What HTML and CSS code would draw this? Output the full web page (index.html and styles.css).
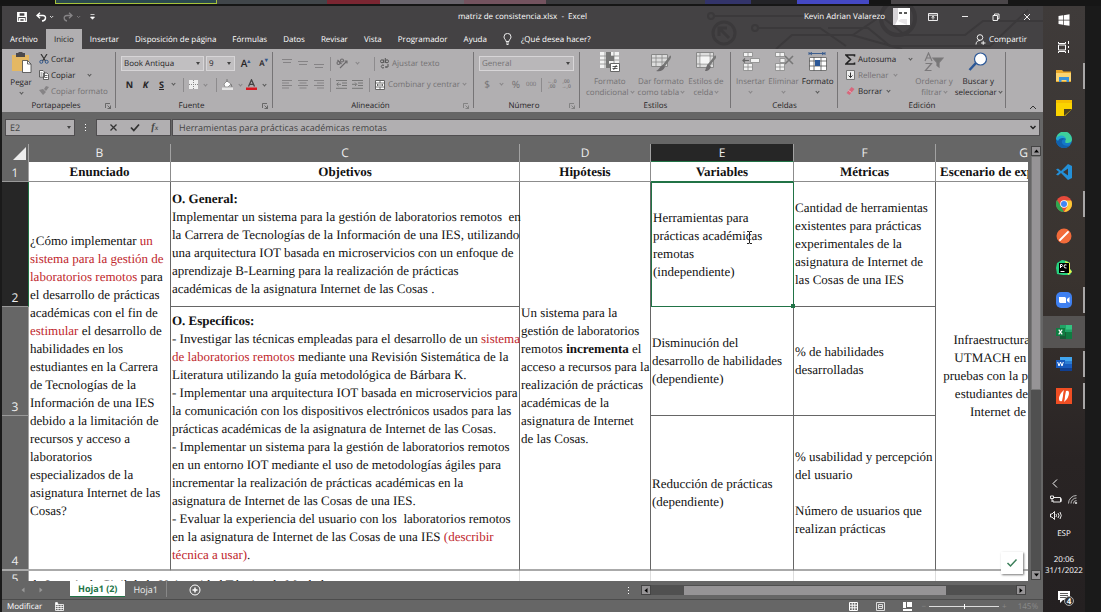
FILE: index.html
```html
<!DOCTYPE html>
<html lang="es">
<head>
<meta charset="utf-8">
<title>matriz de consistencia.xlsx - Excel</title>
<link rel="stylesheet" href="styles.css">
</head>
<body>
<div class="call-strip"><i class="s1"></i><i class="s2"></i><i class="s3"></i><i class="s4"></i><i class="s5"></i><i class="s6"></i><i class="s7"></i><i class="s8"></i><i class="s9"></i><i class="s10"></i><i class="s1"></i><i class="s11"></i></div>
<div class="desktop">
<main class="excel">
  <header class="top">
    <svg class="circuit" width="345" height="43" viewBox="0 0 345 43" fill="none" stroke="#3b393b" stroke-width="2">
      <circle cx="26" cy="27" r="11" stroke-width="3"/><path d="M31 32l-9-9M21 30v-8h8" stroke-width="3"/>
      <circle cx="13" cy="10" r="3"/><path d="M16 10h120"/><circle cx="57" cy="22" r="3"/><path d="M60 22h62l26 18M78 43l16-14h60l50 14M155 29l28-19 24 19h60l18-14h60"/><circle cx="200" cy="12" r="17" stroke-width="4"/><path d="M130 22h40l22 18h100l38-36"/>
    </svg>
    <div class="titlebar">
      <div class="quick">
        <button aria-label="Guardar"><svg width="10" height="10" viewBox="0 0 10 10"><path d="M.7.7h8.6v8.6H.7zM2 .7v3.6h6V.7M2.7 9.3V6.6h4.6v2.7" fill="none" stroke="#fff" stroke-width="1.3"/></svg></button>
        <button aria-label="Deshacer"><svg width="18" height="10" viewBox="0 0 18 10" fill="none" stroke="#fff"><path d="M4 .7L1 3.500 4 6.200M1.300 3.500H7c3.500 0 3.500 5-1 5.500" stroke-width="1.400"/><path d="M14 4l1.600 1.600L17.200 4" stroke-width=".8"/></svg></button>
        <button aria-label="Rehacer"><svg width="18" height="10" viewBox="0 0 18 10" fill="none" stroke="#868486"><path d="M6 .7l3 2.800-3 2.700M8.700 3.500H4C0 3.500.500 8.500 4 9" stroke-width="1.300"/><path d="M14 4l1.600 1.600L17.200 4" stroke-width=".8"/></svg></button>
        <button aria-label="Personalizar"><svg width="5" height="6" viewBox="0 0 5 6"><path d="M.5.5h4M.5 3h4L2.500 5.300z" stroke="#fff" stroke-width=".7" fill="#fff"/></svg></button>
      </div>
      <h1>matriz de consistencia.xlsx&nbsp; -&nbsp; Excel</h1>
      <div class="window-tools">
        <span>Kevin Adrian Valarezo</span>
        <svg width="17" height="17" viewBox="0 0 17 17"><path fill="#fff" d="M0 0h17v17H0z"/><path fill="#d7d4d8" d="M0 0h5v11L2 17H0z"/><path d="M6 5h3M11 5h3" stroke="#222" stroke-width="1.500"/><path d="M5 13l3-2h6v6" fill="#e8e6e8"/></svg>
        <button aria-label="Opciones de la cinta"><svg width="10" height="8" viewBox="0 0 10 8" fill="none" stroke="#fff"><path d="M.5.5h9v7h-9zM.5 2.200h9M5 6.500v-3M3.500 4.700L5 3.300l1.500 1.400" stroke-width=".9"/></svg></button>
        <button aria-label="Minimizar"><svg width="8" height="8"><path d="M1 3.500h6" stroke="#fff" stroke-width=".9"/></svg></button>
        <button aria-label="Restaurar"><svg width="8" height="8" viewBox="0 0 8 8" fill="none" stroke="#fff" stroke-width=".9"><path d="M1 2.500h4.500v5H1zM2.500 2.500V1h4.500v4.800H5.500"/></svg></button>
        <button aria-label="Cerrar"><svg width="8" height="8"><path d="M1 1l6 6M7 1L1 7" stroke="#fff" stroke-width=".9"/></svg></button>
      </div>
    </div>
    <nav class="tabs">
      <button>Archivo</button><button class="active">Inicio</button><button>Insertar</button><button>Disposición de página</button><button>Fórmulas</button><button>Datos</button><button>Revisar</button><button>Vista</button><button>Programador</button><button>Ayuda</button>
      <button class="tell"><svg width="9" height="12" viewBox="0 0 9 12" fill="none" stroke="#fff" stroke-width=".9"><path d="M3 8.500C3 6.500 1 6 1 3.900a3.500 3.500 0 017 0C8 6 6 6.500 6 8.500zM3 10h3M3.500 11.500h2"/></svg>¿Qué desea hacer?</button>
      <button class="share"><svg width="11" height="11" viewBox="0 0 11 11" fill="none" stroke="#fff" stroke-width=".9"><circle cx="5" cy="3.500" r="2.800"/><path d="M1 10.500C1 7.500 3 6.500 5 6.500M6 9h4.500M8.200 6.800v4"/></svg>Compartir</button>
    </nav>
  </header>

  <section class="ribbon">
    <div class="group clipboard">
      <div class="body">
        <button class="big"><svg width="21" height="21" viewBox="0 0 21 21"><path fill="#e4b863" d="M1 3h17v16H1z"/><path fill="#4b494b" d="M5 1h2l1-1h3l1 1h2v4H5z"/><path d="M11.500 8.500h5l3.500 3.500v8.500h-8.500z" fill="#fff" stroke="#444" stroke-width=".8"/><path d="M16.500 8.500V12H20" fill="none" stroke="#444" stroke-width=".8"/></svg>Pegar<i class="chev"></i></button>
        <div class="stack">
          <button><svg width="10" height="10" viewBox="0 0 10 10" fill="none"><path d="M2 0l4.500 7M8 0L3.500 7" stroke="#333" stroke-width="1.200"/><circle cx="2.300" cy="7.800" r="1.500" stroke="#31568a"/><circle cx="7.700" cy="7.800" r="1.500" stroke="#31568a"/></svg>Cortar</button>
          <button><svg width="10" height="10" viewBox="0 0 10 10" fill="#fff" stroke="#444" stroke-width=".8"><path d="M.5.5h3.500L5.500 2v5h-5zM4.500 3H8l1.500 1.500v5h-5z"/><path d="M5.500 5.500h3M5.500 7.500h3M1.500 3h2M1.500 5h2"/></svg>Copiar<i class="chev gap"></i></button>
          <button class="off"><svg width="10" height="10" viewBox="0 0 10 10" fill="#868486"><path d="M7 0l3 1-3 4-2-2zM4 3l3 3-3 3-4-5z"/></svg>Copiar formato</button>
        </div>
      </div>
      <div class="caption"><span>Portapapeles</span><svg class="launch" width="6" height="6" viewBox="0 0 6 6"><path d="M.5 5V.5H5M2.500 2.500l3 3M5.500 2.500v3h-3" fill="none" stroke="#555" stroke-width=".8"/></svg></div>
    </div>
    <div class="group font">
      <div class="body rows">
        <div class="line combos">
          <label class="combo family"><select aria-label="Fuente"><option>Book Antiqua</option></select><i class="tri"></i></label>
          <label class="combo size"><select aria-label="Tamaño"><option>9</option></select><i class="tri"></i></label>
          <button class="letter grow">A<sup>▴</sup></button><button class="letter shrink">A<sup>▾</sup></button>
        </div>
        <div class="line styles">
          <button><b>N</b></button><button><b><em>K</em></b></button><button><b><u>S</u></b></button><i class="chev"></i><i class="bar"></i>
          <svg width="9" height="9" viewBox="0 0 9 9"><path d="M0 0h9v9H0z" fill="#eee"/><path d="M0 4.500h9M4.500 0v9" stroke="#888" stroke-dasharray="1 1"/></svg><i class="chev off"></i><i class="bar"></i>
          <svg width="11" height="11" viewBox="0 0 11 11"><path d="M2 5l3-3 4 3-3 3H3z" fill="#fff" stroke="#777" stroke-width=".7"/><path d="M5 3V0M9 5l1 3" stroke="#777"/><path d="M0 8.500h11V11H0z" fill="#e5e5e5"/></svg><i class="chev off"></i>
          <svg width="11" height="11" viewBox="0 0 11 11"><path d="M2.500 7.500L5.500.8l3 6.700M3.500 5.300h4" fill="none" stroke="#444" stroke-width="1.300"/><path d="M0 8.500h11V11H0z" fill="#d81820"/></svg><i class="chev"></i>
        </div>
      </div>
      <div class="caption"><span>Fuente</span><svg class="launch" width="6" height="6" viewBox="0 0 6 6"><path d="M.5 5V.5H5M2.500 2.500l3 3M5.500 2.500v3h-3" fill="none" stroke="#555" stroke-width=".8"/></svg></div>
    </div>
    <div class="group align off">
      <div class="body rows">
        <div class="line">
          <svg class="al" width="10" height="9" viewBox="0 0 10 9" stroke="#858385"><path d="M0 .5h10M1 3.500h8"/></svg><svg class="al" width="10" height="9" viewBox="0 0 10 9" stroke="#858385"><path d="M0 2.500h10M1 5.500h8"/></svg><svg class="al" width="10" height="9" viewBox="0 0 10 9" stroke="#858385"><path d="M0 5.500h10M1 8.500h8"/></svg><i class="bar"></i>
          <svg width="12" height="11" viewBox="0 0 12 11" fill="none" stroke="#6b696b" stroke-width="1.100"><circle cx="2.500" cy="5" r="1.500"/><path d="M1.500 2l4 4"/><circle cx="6" cy="2.500" r="1.500"/><path d="M4 10l7-7M8.500 3H11v2.500"/></svg><i class="chev"></i><i class="bar push"></i>
          <button><svg width="9" height="11" viewBox="0 0 9 11" fill="none" stroke="#555" stroke-width="1"><circle cx="2" cy="3.300" r="1.500"/><path d="M3.700 1.500V5M5.300 0v5"/><circle cx="7" cy="3.300" r="1.500"/><path d="M4 7.500a1.500 1.500 0 100 2M8 6v3H5.500M6.500 8l-1 1 1 1"/></svg>Ajustar texto</button>
        </div>
        <div class="line">
          <svg class="al" width="10" height="9" viewBox="0 0 10 9" stroke="#858385"><path d="M0 .5h10M0 3h7M0 5.500h10M0 8h7"/></svg><svg class="al" width="10" height="9" viewBox="0 0 10 9" stroke="#858385"><path d="M0 .5h10M1.500 3h7M0 5.500h10M1.500 8h7"/></svg><svg class="al" width="10" height="9" viewBox="0 0 10 9" stroke="#858385"><path d="M0 .5h10M3 3h7M0 5.500h10M3 8h7"/></svg><i class="bar"></i>
          <svg width="11" height="9" viewBox="0 0 11 9" stroke="#777" fill="none"><path d="M0 .5h11M6 3h5M6 5.500h5M0 8.300h11M5 4.300H1M2.500 2.500L.7 4.300l1.800 1.800"/></svg><svg class="al" width="11" height="9" viewBox="0 0 11 9" stroke="#777" fill="none"><path d="M0 .5h11M6 3h5M6 5.500h5M0 8.300h11M0 4.300h4M3 2.500l1.800 1.800L3 6.100"/></svg><i class="bar"></i>
          <button><svg width="10" height="10" viewBox="0 0 10 10"><path d="M.5.500h9v9h-9z" fill="#fff" stroke="#666"/><path d="M0 3h10M0 7h10M5 .5V3M5 7v3M2 5h6M3 4L2 5l1 1M7 4l1 1-1 1" stroke="#555" fill="none" stroke-width=".8"/></svg>Combinar y centrar</button><i class="chev"></i>
        </div>
      </div>
      <div class="caption"><span>Alineación</span><svg class="launch" width="6" height="6" viewBox="0 0 6 6"><path d="M.5 5V.5H5M2.500 2.500l3 3M5.500 2.500v3h-3" fill="none" stroke="#777" stroke-width=".8"/></svg></div>
    </div>
    <div class="group number off">
      <div class="body rows">
        <label class="combo general"><select aria-label="Formato de número"><option>General</option></select><i class="tri"></i></label>
        <div class="line nums"><button class="sym">$</button><i class="chev"></i><button class="sym">%</button><button class="tiny">000</button><i class="bar"></i><button class="dec">←,0<br>,00</button><button class="dec">,00<br>→,0</button></div>
      </div>
      <div class="caption"><span>Número</span><svg class="launch" width="6" height="6" viewBox="0 0 6 6"><path d="M.5 5V.5H5M2.500 2.500l3 3M5.500 2.500v3h-3" fill="none" stroke="#777" stroke-width=".8"/></svg></div>
    </div>
    <div class="group looks off">
      <div class="body">
        <button class="big"><svg width="20" height="20" viewBox="0 0 20 20"><path d="M0 0h19v16H0z" fill="#f2f2f2"/><path d="M0 4h19M0 8h19M0 12h19M5 0v16M14 0v16" stroke="#888" stroke-width=".8"/><path d="M6 0h5v4h3v5H9v3h3v4H6z" fill="#777"/><path d="M10.500 11.500h9v8h-9z" fill="#fff" stroke="#666"/><path d="M12.500 14.500h5M12.500 16.500h5M16.500 13l-3 5" stroke="#333" stroke-width=".8"/></svg>Formato<span>condicional <i class="chev"></i></span></button>
        <button class="big"><svg width="20" height="20" viewBox="0 0 20 20"><path d="M.5 2.500h16v12H.5z" fill="#ddd" stroke="#888"/><path d="M0 6h17M0 10h17M5 2v13M11 2v13" stroke="#888" stroke-width=".8"/><path d="M20 4l-8 10M19 6l-6 8" stroke="#777" stroke-width="2"/><path d="M12 13l2 2c-2 4-5 5-9 4 3-1 4-5 7-6z" fill="#6c6a6c"/></svg>Dar formato<span>como tabla <i class="chev"></i></span></button>
        <button class="big"><svg width="20" height="20" viewBox="0 0 20 20"><path d="M.5.500h17v15H.5z" fill="#ddd" stroke="#888"/><path d="M0 4h18M0 12h18M4 0v16M14 0v16" stroke="#888" stroke-width=".8"/><path d="M4.500 4.500h9v7h-9z" fill="#f5f5f5"/><path d="M20 4l-8 10" stroke="#777" stroke-width="2.500"/><path d="M12 12l3 3c-2 4-4 4-6 4 1-2 1-5 3-7z" fill="#6c6a6c"/></svg>Estilos de<span>celda <i class="chev"></i></span></button>
      </div>
      <div class="caption"><span>Estilos</span></div>
    </div>
    <div class="group cells">
      <div class="body">
        <button class="big off"><svg width="20" height="20" viewBox="0 0 20 20" fill="#f2f2f2" stroke="#888" stroke-width=".8"><path d="M2.500.500h9v4h-9zM7 .5v4M2.500 11.500h9v7h-9zM7 11.500v7M2.500 15h9M9.500 6.500h9v4h-9z"/><path d="M8 8.500H2M4 6.500l-2 2 2 2" fill="none" stroke="#666" stroke-width="1.200"/></svg>Insertar<i class="chev"></i></button>
        <button class="big off"><svg width="20" height="20" viewBox="0 0 20 20" fill="#f2f2f2" stroke="#888" stroke-width=".8"><path d="M1.500.500h9v4h-9zM6 .5v4M1.500 11.500h9v7h-9zM6 11.500v7M1.500 15h9M6 6.500h5v4H6z"/><path d="M11 4l8 8M19 4l-8 8" stroke="#777" stroke-width="1.600"/></svg>Eliminar<i class="chev"></i></button>
        <button class="big"><svg width="20" height="20" viewBox="0 0 20 20"><path d="M1 1.500h16M1 0v3M17 0v3M4 0L2 1.500 4 3M14 0l2 1.500L14 3" stroke="#31568a" stroke-width=".9" fill="none"/><path d="M1 5h18v14H1z" fill="#fff"/><path d="M1.500 5.500h17v13h-17zM1 9h18M1 14h18M6 5v14M13 5v14" stroke="#555" fill="none" stroke-width=".8"/><path d="M7 8h5v6H7z" fill="#2b5797"/></svg>Formato<i class="chev"></i></button>
      </div>
      <div class="caption"><span>Celdas</span></div>
    </div>
    <div class="group edit">
      <div class="body">
        <div class="stack">
          <button><svg width="11" height="11" viewBox="0 0 11 11"><path d="M9.500 2.500V1H1l4.500 4.500L1 10h8.500V8.500" fill="none" stroke="#222" stroke-width="1.600"/></svg>Autosuma<i class="chev gap"></i></button>
          <button class="off"><svg width="11" height="10" viewBox="0 0 11 10"><path d="M1.500.500h8v9h-8z" fill="#eee" stroke="#777"/><path d="M5.500 2.500v5M3.500 5.500l2 2 2-2" stroke="#333" fill="none"/></svg>Rellenar<i class="chev"></i></button>
          <button><svg width="11" height="10" viewBox="0 0 11 10"><path d="M6.500 1l3 2-5 6-3-2z" fill="#d7677c"/><path d="M3.500 4.500l3 2" stroke="#eeb6c0"/></svg>Borrar<i class="chev"></i></button>
        </div>
        <button class="big off"><svg width="20" height="20" viewBox="0 0 20 20" fill="none" stroke="#7b797b" stroke-width="1.200"><path d="M1 9l3.500-8L8 9M2.300 6h4.500M1.500 11.500h6l-6 7h6"/><path d="M9 6h10l-4 4.500V15l-2-1.500v-3z" fill="#777"/></svg>Ordenar y<span>filtrar <i class="chev"></i></span></button>
        <button class="big"><svg width="20" height="20" viewBox="0 0 20 20"><path d="M8 11l-6.500 7" stroke="#2b5797" stroke-width="2.500"/><circle cx="12.500" cy="7" r="6" fill="#fff" stroke="#2b5797" stroke-width="1.200"/></svg>Buscar y<span>seleccionar <i class="chev"></i></span></button>
      </div>
      <div class="caption"><span>Edición</span></div>
    </div>
    <button class="collapse" aria-label="Contraer la cinta"><svg width="8" height="5"><path d="M1 4l3-3 3 3" fill="none" stroke="#333"/></svg></button>
  </section>

  <div class="formula-row">
    <div class="name-box"><input aria-label="Cuadro de nombres" value="E2"><i class="tri"></i></div>
    <svg width="3" height="9" fill="#fff"><path d="M1 1h1v1H1zM1 4h1v1H1zM1 7h1v1H1z"/></svg>
    <div class="fx">
      <button aria-label="Cancelar"><svg width="9" height="9"><path d="M1.500 1.500l6 6M7.500 1.500l-6 6" stroke="#333" stroke-width="1.300"/></svg></button>
      <button aria-label="Introducir"><svg width="10" height="9"><path d="M1 4.500L3.800 7.500 9 1.500" fill="none" stroke="#333" stroke-width="1.800"/></svg></button>
      <button class="fn"><em>f<small>x</small></em></button>
    </div>
    <div class="formula"><input aria-label="Barra de fórmulas" value="Herramientas para prácticas académicas remotas"><svg width="6" height="5"><path d="M.5 1L3 3.500 5.500 1" fill="none" stroke="#222" stroke-width="1.500"/></svg></div>
  </div>

  <section class="sheet">
    <div class="grid">
      <table>
        <colgroup><col class="c0"><col class="cB"><col class="cC"><col class="cD"><col class="cE"><col class="cF"><col class="cG"></colgroup>
        <thead><tr><th class="corner"><svg width="13" height="13"><path d="M13 0v13H0z" fill="#eee"/></svg></th><th>B</th><th>C</th><th>D</th><th class="sel">E</th><th>F</th><th>G</th></tr></thead>
        <tbody>
          <tr class="r1"><th>1</th><td>Enunciado</td><td>Objetivos</td><td>Hipótesis</td><td class="above">Variables</td><td>Métricas</td><td>Escenario de experimentación</td></tr>
          <tr class="r2"><th class="sel">2</th>
            <td rowspan="3">¿Cómo implementar <mark>un<br>sistema para la gestión de<br>laboratorios remotos</mark> para<br>el desarrollo de prácticas<br>académicas con el fin de<br><mark>estimular</mark> el desarrollo de<br>habilidades en los<br>estudiantes en la Carrera<br>de Tecnologías de la<br>Información de una IES<br>debido a la limitación de<br>recursos y acceso a<br>laboratorios<br>especializados de la<br>asignatura Internet de las<br>Cosas?</td>
            <td><b>O. General:</b><br>Implementar un sistema para la gestión de laboratorios remotos&nbsp; en<br>la Carrera de Tecnologías de la Información de una IES, utilizando<br>una arquitectura IOT basada en microservicios con un enfoque de<br>aprendizaje B-Learning para la realización de prácticas<br>académicas de la asignatura Internet de las Cosas .</td>
            <td rowspan="3">Un sistema para la<br>gestión de laboratorios<br>remotos <b>incrementa</b> el<br>acceso a recursos para la<br>realización de prácticas<br>académicas de la<br>asignatura de Internet<br>de las Cosas.</td>
            <td class="current">Herramientas para<br>prácticas académicas<br>remotas<br>(independiente)<svg class="ibeam" width="7" height="13" viewBox="0 0 7 13"><path d="M1 .5h2l.5.500.5-.5h2M1 12.500h2l.5-.5.5.500h2M3.500 1v11" fill="none" stroke="#222"/></svg></td>
            <td>Cantidad de herramientas<br>existentes para prácticas<br>experimentales de la<br>asignatura de Internet de<br>las Cosas de una IES</td>
            <td rowspan="3" class="center">Infraestructura de las sedes<br>UTMACH en un plan para<br>pruebas con la participación de<br>estudiantes de las materias<br>Internet de las Cosas</td></tr>
          <tr class="r3"><th>3</th>
            <td rowspan="2"><b>O. Específicos:</b><br>- Investigar las técnicas empleadas para el desarrollo de un <mark>sistema<br>de laboratorios remotos</mark> mediante una Revisión Sistemática de la<br>Literatura utilizando la guía metodológica de Bárbara K.<br>- Implementar una arquitectura IOT basada en microservicios para<br>la comunicación con los dispositivos electrónicos usados para las<br>prácticas académicas de la asignatura de Internet de las Cosas.<br>- Implementar un sistema para la gestión de laboratorios remotos<br>en un entorno IOT mediante el uso de metodologías ágiles para<br>incrementar la realización de prácticas académicas en la<br>asignatura de Internet de las Cosas de una IES.<br>- Evaluar la experiencia del usuario con los&nbsp; laboratorios remotos<br>en la asignatura de Internet de las Cosas de una IES <mark>(describir<br>técnica a usar)</mark>.</td>
            <td>Disminución del<br>desarrollo de habilidades<br>(dependiente)</td><td>% de habilidades<br>desarrolladas</td></tr>
          <tr class="r4"><th>4</th><td>Reducción de prácticas<br>(dependiente)</td><td>% usabilidad y percepción<br>del usuario<br><br>Número de usuarios que<br>realizan prácticas</td></tr>
          <tr class="r5"><th>5</th><td colspan="2">de Ingeniería Civil de la Universidad Técnica de Machala</td><td></td><td></td><td></td><td></td></tr>
        </tbody>
      </table>
      <button class="tick" aria-label="Aceptar"><svg width="12" height="10"><path d="M1.500 5l3 3L10.500 1.500" fill="none" stroke="#3c7f5a" stroke-width="1.500"/></svg></button>
    </div>
    <div class="vscroll"><i class="cap"><svg width="5" height="4"><path d="M0 3.500L2.500.5 5 3.500z"/></svg></i><i class="thumb"></i><i class="track"></i><i class="cap"><svg width="5" height="4"><path d="M0 .5h5L2.500 3.500z"/></svg></i></div>
  </section>

  <footer class="sheets">
    <div class="sheet-nav"><svg width="4" height="6"><path d="M3.500.500v5L.5 3z" fill="#999"/></svg><svg width="4" height="6"><path d="M.5.500v5L3.500 3z" fill="#999"/></svg></div>
    <button class="active">Hoja1 (2)</button><button class="second">Hoja1</button>
    <button class="add" aria-label="Hoja nueva"><svg width="12" height="12" fill="none" stroke="#fff"><circle cx="6" cy="6" r="5"/><path d="M3.500 6h5M6 3.500v5" stroke-width="1.500"/></svg></button>
    <svg class="dots" width="3" height="9" fill="#fff"><path d="M1 1h1v1H1zM1 4h1v1H1zM1 7h1v1H1z"/></svg>
    <div class="hscroll"><i class="cap"><svg width="4" height="5"><path d="M3.500 0v5L.5 2.500z"/></svg></i><i class="before"></i><i class="thumb"></i><i class="after"></i><i class="cap"><svg width="4" height="5"><path d="M.5 0v5l3-2.500z"/></svg></i></div>
  </footer>
  <div class="status">
    <span>Modificar</span>
    <svg width="9" height="9" viewBox="0 0 9 9" fill="none" stroke="#fff" stroke-width=".8"><path d="M.5 2.500h8v6h-8zM.5 4.500h8M.5 6.500h8M3 2.500v6M6 2.500v6"/><circle cx="1.500" cy="1.500" r="1.200" fill="#fff"/></svg>
    <div class="views">
      <svg width="9" height="9" stroke="#fff" fill="none"><path d="M.5.500h8v8h-8zM.5 3.200h8M.5 5.800h8M3.200.500v8M5.800.500v8"/></svg>
      <svg width="9" height="9" stroke="#ddd" fill="none"><path d="M.5.500h8v8h-8zM2.500 2.500h4v4h-4zM3 4.500h3"/></svg>
      <svg width="9" height="9" fill="#fff"><path d="M0 0h3v6H0zM4 0h5v5H4zM0 7h9v2H0z"/></svg>
    </div>
    <div class="zoom"><span>−</span><input type="range" aria-label="Zoom" min="0" max="100" value="51"><span>+</span><output>145%</output></div>
  </div>
</main>

<aside class="taskbar">
  <button class="short" aria-label="Inicio"><svg width="12" height="12" viewBox="0 0 12 12" fill="#fff"><path d="M.5 2l4.500-.7v4.400H.5zM5.700 1.200L11.500.300v5.400H5.700zM.5 6.400H5v4.400L.5 10.100zM5.700 6.400h5.800v5.400l-5.800-.9z"/></svg></button>
  <button class="short" aria-label="Vista de tareas"><svg width="12" height="12" viewBox="0 0 12 12" fill="none" stroke="#fff"><path d="M.5 4h7v5h-7zM.5 1v1.500h7V1M.5 12v-1.500h7V12M10.500 0v3M10.500 5v2M10.500 9v3"/></svg></button>
  <button class="run" aria-label="Explorador"><svg width="16" height="14" viewBox="0 0 16 14"><path d="M0 1h6l1.500 1.500H15V13H0z" fill="#e8a82c"/><path d="M0 4h15v8H0z" fill="#fbd571"/><path d="M3 13V8h10v5h-2.500v-2h-5v2z" fill="#3a92d8"/></svg></button>
  <button aria-label="Notas"><svg width="16" height="16" viewBox="0 0 16 16"><path d="M0 0h16v9l-7 7H0z" fill="#fbd400"/><path d="M8 9h8l-8 7z" fill="#4a4020"/><path d="M0 0h16v3H0z" fill="#f5c000"/></svg></button>
  <button aria-label="Edge"><svg width="16" height="16" viewBox="0 0 16 16"><circle cx="8" cy="8" r="8" fill="#1577c8"/><path d="M0 8a8 8 0 0116-1c0 3-2 4-5 4-2 0-2-1-1.500-2C10 6 4 4 0 8z" fill="#3ecf9b"/><path d="M0 8c3-5 10-4 10 0-2-2-5 0-4 3 1 2 4 4 8 2-5 6-14 2-14-5z" fill="#1160ac"/><path d="M0 7c3-5 9-4 10 0-3-2-7-1-8 2z" fill="#22a6d4"/></svg></button>
  <button aria-label="Visual Studio Code"><svg width="16" height="16" viewBox="0 0 16 16"><path d="M12 0l4 2v12l-4 2-7-7-3 2.500L0 10.500 3 8 0 5.500l2-1L5 7z" fill="#2390d8"/><path d="M12 4.500v7L7 8z" fill="#3a3635"/></svg></button>
  <button class="run" aria-label="Chrome"><svg width="16" height="16" viewBox="0 0 16 16"><circle cx="8" cy="8" r="8" fill="#e64a3b"/><path d="M1 4l4.500 7L8 16A8 8 0 011 4z" fill="#2fa650"/><path d="M8 4.500h7.200A8 8 0 018 16l3.500-6z" fill="#fcc934"/><circle cx="8" cy="8" r="3.800" fill="#fff"/><circle cx="8" cy="8" r="3" fill="#4286f4"/></svg></button>
  <button aria-label="Postman"><svg width="16" height="16" viewBox="0 0 16 16"><circle cx="8" cy="8" r="7.500" fill="#f26b3a"/><path d="M4 12l6-6 2-2" stroke="#fff" stroke-width="1.800" stroke-linecap="round"/></svg></button>
  <button aria-label="PyCharm"><svg width="16" height="16" viewBox="0 0 16 16"><path d="M1 3l5-3 5 1 3 2-1 5 3 3-2 4H7l-6-1-1-6z" fill="#26d27f"/><path d="M9 1l5 2v6l2 3-4 3z" fill="#e7f04b"/><path d="M3 3h10v10H3z" fill="#000"/><path d="M4.500 8V4.500H6q1 1 0 2H4.500M10.500 5Q8 4 8 6.200T10.500 8M4.500 11.500h4" stroke="#fff" fill="none"/></svg></button>
  <button class="run" aria-label="Zoom"><svg width="16" height="16" viewBox="0 0 16 16"><rect width="16" height="16" rx="5" fill="#3f80f0"/><path d="M3 5h6l1 1v5H4l-1-1zM11 7l2.500-2v6L11 9z" fill="#fff"/></svg></button>
  <button class="on" aria-label="Excel"><svg width="16" height="14" viewBox="0 0 16 14"><path d="M4 0h12v14H4z" fill="#21a366"/><path d="M10 0h6v4.500h-6z" fill="#33c481"/><path d="M4 7h6v7H4z" fill="#185c37"/><path d="M10 7h6v7h-6z" fill="#107c41"/><path d="M0 3h9v8H0z" fill="#107c41"/><path d="M2.700 4.700l3.500 4.600M6.200 4.700L2.700 9.300" stroke="#fff" stroke-width="1.200"/></svg></button>
  <button class="run" aria-label="Word"><svg width="16" height="14" viewBox="0 0 16 14"><path d="M4 0h12v4H4z" fill="#41a5ee"/><path d="M4 4h12v3H4z" fill="#2b7cd3"/><path d="M4 7h12v4H4z" fill="#185abd"/><path d="M4 11h12v3H4z" fill="#103f91"/><path d="M0 3h9v8H0z" fill="#185abd"/><path d="M1.700 5l1.300 4 1.500-4L6 9l1.300-4" stroke="#fff" fill="none"/></svg></button>
  <button class="run" aria-label="Nitro"><svg width="16" height="16" viewBox="0 0 16 16"><path d="M0 0h16v16H0z" fill="#f04e23"/><path d="M3 11q0-5 5-9-1 3-1 6l-1 5q-3 1-3-2zM13 5q0 5-5 9 1-3 1-6l1-5q3-1 3 2z" fill="#fff"/></svg></button>
  <div class="tray">
    <div class="tray-row"><svg width="8" height="9"><path d="M7 .5L3 4.500l4 4" fill="none" stroke="#fff"/></svg></div>
    <div class="tray-row"><svg width="12" height="8" viewBox="0 0 12 8" fill="none" stroke="#fff" stroke-width=".9"><path d="M4 2.500h6.500v4.500H3V5M10.500 4H12v2h-1.500M.5 1h3v2.500h-3zM2 3.500V7"/></svg><svg width="10" height="9" viewBox="0 0 10 9" fill="none" stroke="#ccc" stroke-width=".9"><path d="M.5 8.500a8 8 0 018-8M3 8.500A5.500 5.500 0 018.500 3M5.500 8.500a3 3 0 013-3"/><circle cx="8" cy="8" r=".8" fill="#fff"/></svg></div>
    <div class="tray-row"><svg width="12" height="9" viewBox="0 0 12 9" fill="none" stroke="#fff" stroke-width=".9"><path d="M.5 3h1.500l2.500-2.500v8L2 6H.5zM6 3q1 1.500 0 3M8 2q2 2.500 0 5M10 1q2.500 3.500 0 7"/></svg></div>
    <span class="lang">ESP</span>
    <time>20:06<br>31/1/2022</time>
    <button class="notes" aria-label="Notificaciones"><svg width="12" height="12"><path d="M0 0h12v9H5l-3 3V9H0z" fill="#fff"/><path d="M2 2.500h8M2 4.500h8M2 6.500h8" stroke="#333" stroke-width=".8"/></svg><b>4</b></button>
  </div>
</aside>
</div>
</body>
</html>
```

FILE: styles.css
```css
* { box-sizing: border-box; }
body {
  margin: 0; height: 100vh; display: flex; flex-direction: column; overflow: hidden;
  background: #1a1a1a; color: #262426; font: 8px/11px "Open Sans", "Noto Sans", sans-serif;
  text-rendering: geometricPrecision;
}
button, input, select { font: inherit; color: inherit; background: none; border: 0; padding: 0; margin: 0; border-radius: 0; white-space: nowrap; text-rendering: inherit; }
svg { display: block; flex: none; }
i { flex: none; }

.call-strip {
  height: 6px; flex: none; display: grid; padding-bottom: 2px; background: #161616;
  grid-template-columns: 55fr 162fr 110fr 53fr 84fr 82fr 159fr 46fr 46fr 72fr 22fr 117fr 93fr;
}
.s1 { background: #151515; }
.s2 { background: #2c4a50; border: solid #a6c33a; border-width: 0 1px 1px; }
.s3 { background: #41464a; } .s4 { background: #7b2632; } .s5 { background: #69646c; }
.s6 { background: #74535f; } .s7 { background: #3b3b3e; } .s8 { background: #33346a; }
.s9 { background: #232327; } .s10 { background: #4448c4; } .s11 { background: #4a4649; }

.desktop { flex: 1; min-height: 0; display: flex; padding: 0 16px 0 2px; }
.excel { flex: 1; min-width: 0; display: flex; flex-direction: column; background: #666; }

/* title bar and tabs */
.top { position: relative; flex: none; background: #444244; color: #fff; }
.circuit { position: absolute; right: 0; top: 0; }
.titlebar { position: relative; height: 23px; display: grid; grid-template-columns: 1fr auto 1fr; align-items: center; padding-bottom: 2px; }
.titlebar h1 { margin: 0; font: inherit; }
.quick { display: flex; align-items: center; gap: 9px; padding-left: 15px; }
.window-tools { display: flex; align-items: center; justify-content: flex-end; padding-right: 12px; }
.window-tools span { padding-right: 8px; }
.window-tools button { margin-left: 23px; }
.window-tools svg + button { margin-left: 18px; }
.tabs { position: relative; height: 20px; display: flex; }
.tabs button { padding: 0 8px; }
.tabs .active { background: #b1afb1; color: #262426; }
.tabs .tell, .tabs .share { display: flex; align-items: center; gap: 9px; }
.tabs .share { margin-left: auto; gap: 3px; padding-right: 16px; }

/* ribbon */
.ribbon { flex: none; display: flex; height: 63px; background: #b1afb1; }
.group { display: flex; flex-direction: column; position: relative; padding-top: 2px; flex: 0 1 auto; }
.group::after { content: ""; position: absolute; right: 0; top: 3px; bottom: 4px; width: 1px; background: #767476; }
.clipboard { width: 114px; } .font { width: 157px; } .align { width: 201px; } .number { width: 106px; }
.looks { width: 151px; } .cells { width: 107px; } .edit { width: 168px; }
.body { flex: 1; display: flex; }
.rows { flex-direction: column; padding-top: 5px; gap: 6px; }
.line { display: flex; align-items: center; height: 15px; }
.caption { display: flex; height: 11px; align-items: center; padding: 0 5px; margin-bottom: 1px; color: #262426; }
.caption span { flex: 1; text-align: center; }
.off { color: #737173; }
.chev { display: inline-block; width: 3px; height: 3px; border: solid #555; border-width: 0 1px 1px 0; transform: rotate(45deg); margin: 0 3px 2px; }
.chev.gap { margin-left: 11px; }
.off .chev, .chev.off { border-color: #868486; }
.tri { border: 2px solid transparent; border-top: 3px solid #444; border-bottom: 0; margin-right: 3px; }
.bar { width: 1px; height: 14px; background: #8d8b8d; }
.big { display: flex; flex-direction: column; align-items: center; padding-top: 1px; }
.big svg { margin-bottom: 4px; }
.big > .chev { margin-top: 3px; }
.stack { display: flex; flex-direction: column; }
.stack button { display: flex; align-items: center; gap: 2px; height: 16px; }
.clipboard .big { width: 36px; margin-left: 1px; }

.font .rows, .number .rows { padding-left: 5px; }
.combos { gap: 2px; }
.combo { display: flex; align-items: center; height: 15px; border: 1px solid #d7d5d7; background: #c1bfc1; }
.combo select { appearance: none; flex: 1; min-width: 0; padding-left: 2px; height: 13px; }
.family { width: 83px; } .size { width: 29px; } .general { width: 95px; background: #b9b7b9; }
.letter { width: 15px; font-size: 10px; font-weight: 600; margin-left: 1px; }
.letter sup { font-size: 6px; line-height: 0; color: #31568a; }
.shrink { font-size: 8px; }
.styles { padding-left: 3px; font-size: 9px; }
.styles button { width: 11px; margin-right: 5px; }
.styles button + .chev { margin-left: 0; }
.styles .bar { margin: 0 5px; }
.styles svg + .chev { margin: 0 4px 0 6px; }

.align .rows { padding-left: 9px; }
.al { margin-right: 6px; }
.align .line > svg:not(.al) { margin: 0 5px; }
.align .line button { display: flex; align-items: center; gap: 3px; margin-left: 5px; }
.push { margin-left: 12px; }

.nums { gap: 5px; padding-left: 3px; }
.nums .sym { font-size: 10px; width: 10px; }
.nums .tiny { font-size: 6px; }
.dec { font-size: 5px; line-height: 5px; font-weight: 600; }

.looks .body { padding-left: 6px; gap: 4px; }
.looks .big .chev, .edit .big .chev { margin: 0 0 2px; }
.cells .body { padding-left: 5px; gap: 3px; }
.edit .body { padding-left: 7px; }
.edit .big { margin-left: auto; }
.edit .big:last-child { margin: 0 10px 0 2px; }
.collapse { align-self: flex-end; margin: 0 6px 2px auto; }

/* formula bar */
.formula-row { flex: none; display: flex; align-items: center; height: 32px; padding: 0 3px 1px; color: #444; font-size: 9px; }
.name-box, .fx, .formula { display: flex; align-items: center; height: 17px; background: #b1afb1; border: 1px solid #4f4d4f; }
.name-box { width: 70px; margin-right: 9px; }
.name-box input { flex: 1; min-width: 0; padding-left: 4px; }
.fx { width: 75px; margin: 0 1px 0 9px; justify-content: space-evenly; }
.fn { font: bold 10px/11px "Liberation Serif", serif; }
.fn small { font-size: 7px; }
.formula { flex: 1; padding-right: 3px; }
.formula input { flex: 1; padding-left: 6px; }

/* worksheet */
.sheet { flex: 1; min-height: 0; display: flex; }
.grid { position: relative; flex: 1; min-width: 0; overflow: hidden; background: #fff; }
table { table-layout: fixed; width: 1110px; border-spacing: 0; font: 13px/18px "Liberation Serif", serif; color: #111; }
.c0 { width: 27px; } .cB { width: 142px; } .cC { width: 349px; } .cD { width: 131px; }
.cE { width: 143px; } .cF { width: 142px; } .cG { width: 176px; }
th { padding: 0; background: #666; color: #eee; font: 12px/16px "Open Sans", sans-serif; border-right: 1px solid #a2a2a2; }
thead th { height: 18px; }
tbody th { vertical-align: bottom; border-bottom: 1px solid #999; }
th.sel { background: #262626; }
thead .sel { border-bottom: 1px solid #217346; }
tbody .sel { border-right: 1px solid #217346; }
.corner svg { margin-left: auto; margin-right: 2px; }
td { padding: 0 0 0 1px; border: solid #666; border-width: 0 1px 1px 0; white-space: nowrap; vertical-align: middle; }
.r1 td { font-weight: bold; text-align: center; height: 20px; padding: 0; border-color: #8c8c8c; }
.r2 { height: 125px; } .r3 { height: 109px; } .r4 { height: 155px; }
.r1 td.above { border-bottom-color: #217346; }
.current { position: relative; border: 1px solid #217346; }
.current::after { content: ""; position: absolute; right: -2px; bottom: -2px; width: 4px; height: 4px; background: #217346; }
.ibeam { position: absolute; left: 94px; top: 48px; }
.center { text-align: center; }
.r4 th, .r4 td, [rowspan] { border-bottom: 2px solid #aaa; }
.r5 td { height: 24px; padding-top: 4px; border-color: #ddd; }
.r5 th { vertical-align: top; }
mark { background: none; color: #c0272d; }
.tick { position: absolute; right: 5px; bottom: 7px; width: 22px; height: 22px; display: grid; place-items: center; background: #fff; box-shadow: 1px 1px 2px #777; }
.vscroll { width: 15px; flex: none; display: flex; flex-direction: column; padding: 2px 2px 1px 3px; }
.cap { width: 10px; height: 10px; background: #969496; border: 1px solid #444; display: grid; place-items: center; font-size: 0; }
.vscroll .thumb { flex: 234; background: #969496; border: 1px solid #777; }
.vscroll .track { flex: 181; background: #505050; }

/* sheet tabs and status */
.sheets { flex: none; display: flex; align-items: center; height: 18px; color: #eee; font-size: 9px; }
.sheet-nav { width: 68px; display: flex; gap: 14px; padding-left: 19px; }
.sheets .active { align-self: flex-start; height: 16px; padding: 0 8px; background: #fff; color: #217346; font-weight: bold; border-bottom: 1px solid #217346; }
.second { align-self: flex-start; height: 16px; padding: 0 8px; border-right: 1px solid #888; }
.add { margin-left: 22px; }
.dots { margin-left: auto; }
.hscroll { width: 37%; display: flex; align-items: center; margin: 0 17px 0 11px; background: #505050; }
.hscroll .thumb { flex: 264; height: 9px; background: #969496; }
.before { flex: 34; } .after { flex: 71; }
.status { flex: none; display: flex; align-items: center; height: 13px; padding: 0 5px; border-top: 1px solid #4c4c4c; color: #fff; }
.status > svg { margin-left: 13px; }
.views { display: flex; gap: 18px; margin-left: auto; }
.zoom { display: flex; align-items: center; gap: 3px; margin-left: 10px; color: #8a8a8a; }
.zoom input { appearance: none; width: 70px; height: 1px; background: #ddd; }
.zoom input::-webkit-slider-thumb { appearance: none; width: 1px; height: 5px; background: #fff; }
.zoom output { margin-left: 8px; }

/* taskbar */
.taskbar { width: 42px; flex: none; display: flex; flex-direction: column; background: linear-gradient(#3f3b3a, #39332f 45%, #292424 75%, #242021); color: #fff; }
.taskbar > button { height: 32px; flex: none; display: grid; place-items: center; position: relative; }
.taskbar > .short { height: 27px; }
.taskbar .run::after { content: ""; position: absolute; right: 0; top: 3px; bottom: 3px; width: 2px; background: #a9a7a7; }
.taskbar .on { background: #565453; }
.tray { margin-top: auto; display: flex; flex-direction: column; text-align: center; padding-bottom: 9px; }
.tray-row { height: 16px; display: flex; align-items: center; gap: 6px; padding-left: 7px; }
.lang { margin: 5px 0 15px; }
.notes { position: relative; align-self: center; margin-top: 15px; }
.notes b { position: absolute; left: 6px; top: 5px; width: 10px; height: 10px; line-height: 9px; border: 1px solid #aaa; border-radius: 50%; background: #333; }
```
